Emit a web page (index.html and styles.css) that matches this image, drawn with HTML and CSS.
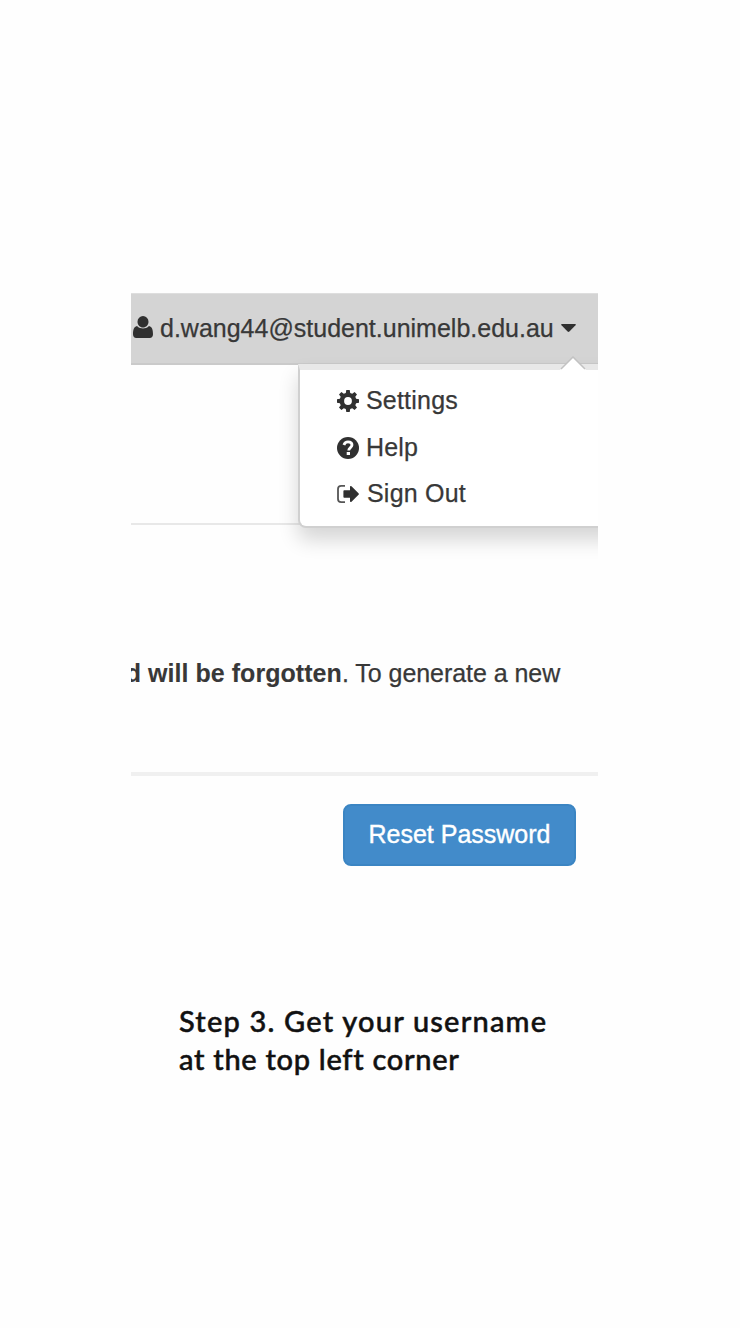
FILE: index.html
```html
<!DOCTYPE html>
<html lang="en">
<head>
<meta charset="utf-8">
<title>Get your username</title>
<link rel="stylesheet" href="styles.css">
</head>
<body>
<main class="page">
  <section class="panel">
    <header class="topbar">
      <svg class="user-icon" viewBox="0 0 20 22"><path d="M10 0a5.500 5.700 0 0 1 5.500 5.700C15.500 9 13 11.500 10 11.500S4.500 9 4.500 5.700A5.500 5.700 0 0 1 10 0zM4 10C5.800 11.900 8 12.400 10 12.400s4.200-.5 6-2.400C19.200 10.800 20 14 20 18.300 20 20.600 18.800 22 16.700 22H3.300C1.200 22 0 20.600 0 18.300 0 14 .8 10.800 4 10z"/></svg>
      <span class="email">d.wang44@student.unimelb.edu.au</span>
      <svg class="caret" viewBox="0 0 15 8"><path d="M.8 0h13.400q1.200.3.300 1.300L8.400 7.500q-.9.900-1.800 0L.5 1.300Q-.4.300.8 0z"/></svg>
    </header>
    <div class="intro"></div>
    <p class="message"><span class="cut"><b>d</b></span><b class="strong">will be forgotten</b><span class="rest">. To generate a new</span></p>
    <div class="actions"><button class="reset">Reset Password</button></div>
    <nav class="menu">
      <a class="item"><svg class="icon" viewBox="0 0 22 22"><path fill-rule="evenodd" d="M9.300 0h3.400l.5 2.900 2 .8L17.600 2 20 4.400l-1.700 2.400.8 2 2.900.5v3.400l-2.900.5-.8 2 1.700 2.400-2.400 2.400-2.400-1.700-2 .8-.5 2.900H9.300l-.5-2.900-2-.8L4.400 20 2 17.600l1.700-2.400-.8-2-2.900-.5V9.300l2.900-.5.8-2L2 4.400 4.400 2l2.400 1.700 2-.8zM11 7.100a3.900 3.900 0 1 0 0 7.800 3.900 3.900 0 0 0 0-7.800z"/></svg><span>Settings</span></a>
      <a class="item"><svg class="icon" viewBox="0 0 22 22"><circle cx="11" cy="11" r="11"/><path class="mark" d="M6.900 8C7.600 5.900 9 4.900 11 4.900c2.400 0 4 1.200 4 3.200 0 2.500-3.300 2.500-3.300 5.300"/><path class="dot" d="M9.700 15h3.300v3H9.700z"/></svg><span>Help</span></a>
      <a class="item"><svg class="icon" viewBox="0 0 22 22"><path class="door" d="M8 2.800H4.200Q1 2.800 1 6v10q0 3.200 3.200 3.200H8"/><path d="M7.200 7.200H13V3.800q.2-1.300 1.500-.5l7 6.900q.8.800 0 1.600l-7 6.900q-1.300.8-1.500-.5v-3.400H7.200q-.8-.2-.8-1V8.200q0-.8.800-1z"/></svg><span class="t-out">Sign Out</span></a>
    </nav>
    <svg class="pointer" viewBox="0 0 26 14"><path class="pointer-fill" d="M0 14 13 1l13 13z"/><path class="pointer-line" d="M1 13 13 1l12 12"/></svg>
  </section>
  <p class="caption"><span class="line-one">Step 3. Get your username</span><br><span class="line-two">at the top left corner</span></p>
</main>
</body>
</html>
```
FILE: styles.css
```css
body { margin: 0; background: #fefefe; }
.page { box-sizing: border-box; width: 740px; height: 1328px; padding: 293px 0 0 131px; }
.panel { position: relative; width: 467px; height: 600px; overflow: hidden; font-family: "Liberation Sans", Arial, sans-serif; font-size: 25px; line-height: 30px; color: #383838; -webkit-text-stroke: .25px currentColor; }
.topbar { box-sizing: border-box; height: 72px; display: flex; align-items: flex-start; background: #d4d4d4; border-top: 1px solid #dedede; border-bottom: 2px solid #cacaca; padding: 19px 0 0 2px; }
.user-icon { width: 20px; height: 22px; margin-top: 3px; fill: #303030; flex: none; }
.email { margin-left: 7px; width: 394px; white-space: nowrap; }
.caret { width: 15px; height: 8px; margin: 11px 0 0 7px; fill: #303030; flex: none; }
.intro { height: 158px; border-bottom: 2px solid #e8e8e8; }
.message { margin: 133px 0 0; height: 30px; display: flex; white-space: pre; -webkit-text-stroke-width: .1px; }
.cut { width: 10px; display: flex; justify-content: flex-end; overflow: hidden; }
.strong { margin-left: 7px; width: 194px; letter-spacing: .05px; }
.rest { letter-spacing: -.05px; -webkit-text-stroke-width: .25px; }
.actions { margin-top: 84px; border-top: 4px solid #f0f0f0; padding: 28px 22px 0 0; display: flex; justify-content: flex-end; }
.reset { width: 233px; height: 62px; border: 2px solid #3b85c3; border-radius: 8px; background: #428bca; color: #fff; padding: 0 0 2px; font: 25px/30px "Liberation Sans", Arial, sans-serif; white-space: nowrap; -webkit-text-stroke: .4px #fff; }
.menu { position: absolute; box-sizing: border-box; left: 167px; top: 71px; width: 360px; height: 164px; padding: 15px 0 0 37px; background: #fff; border: 2px solid #d0d0d0; border-top: 6px solid #e8e8e8; border-radius: 0 0 8px 8px; background-clip: padding-box; box-shadow: 0 12px 20px rgba(0,0,0,.16); }
.item { display: flex; height: 46.5px; margin-top: -6px; margin-bottom: 6px; line-height: 43px; letter-spacing: .2px; }
.icon { width: 22px; height: 22px; margin: 11px 7px 0 0; fill: #303030; flex: none; }
.t-out { margin-left: 1px; }
.mark { fill: none; stroke: #fff; stroke-width: 2.800; }
.dot { fill: #fff; }
.door { fill: none; stroke: #555; stroke-width: 1.800; }
.pointer { position: absolute; left: 429px; top: 63px; width: 26px; height: 14px; }
.pointer-fill { fill: #fff; }
.pointer-line { fill: none; stroke: #c2c2c2; stroke-width: 1.500; }
.caption { margin: 109px 0 0 48px; font: 500 29px/38px Lato, sans-serif; color: #111; white-space: nowrap; -webkit-text-stroke: .5px #111; }
.line-one { letter-spacing: 1.200px; }
.line-two { letter-spacing: .7px; }
```
